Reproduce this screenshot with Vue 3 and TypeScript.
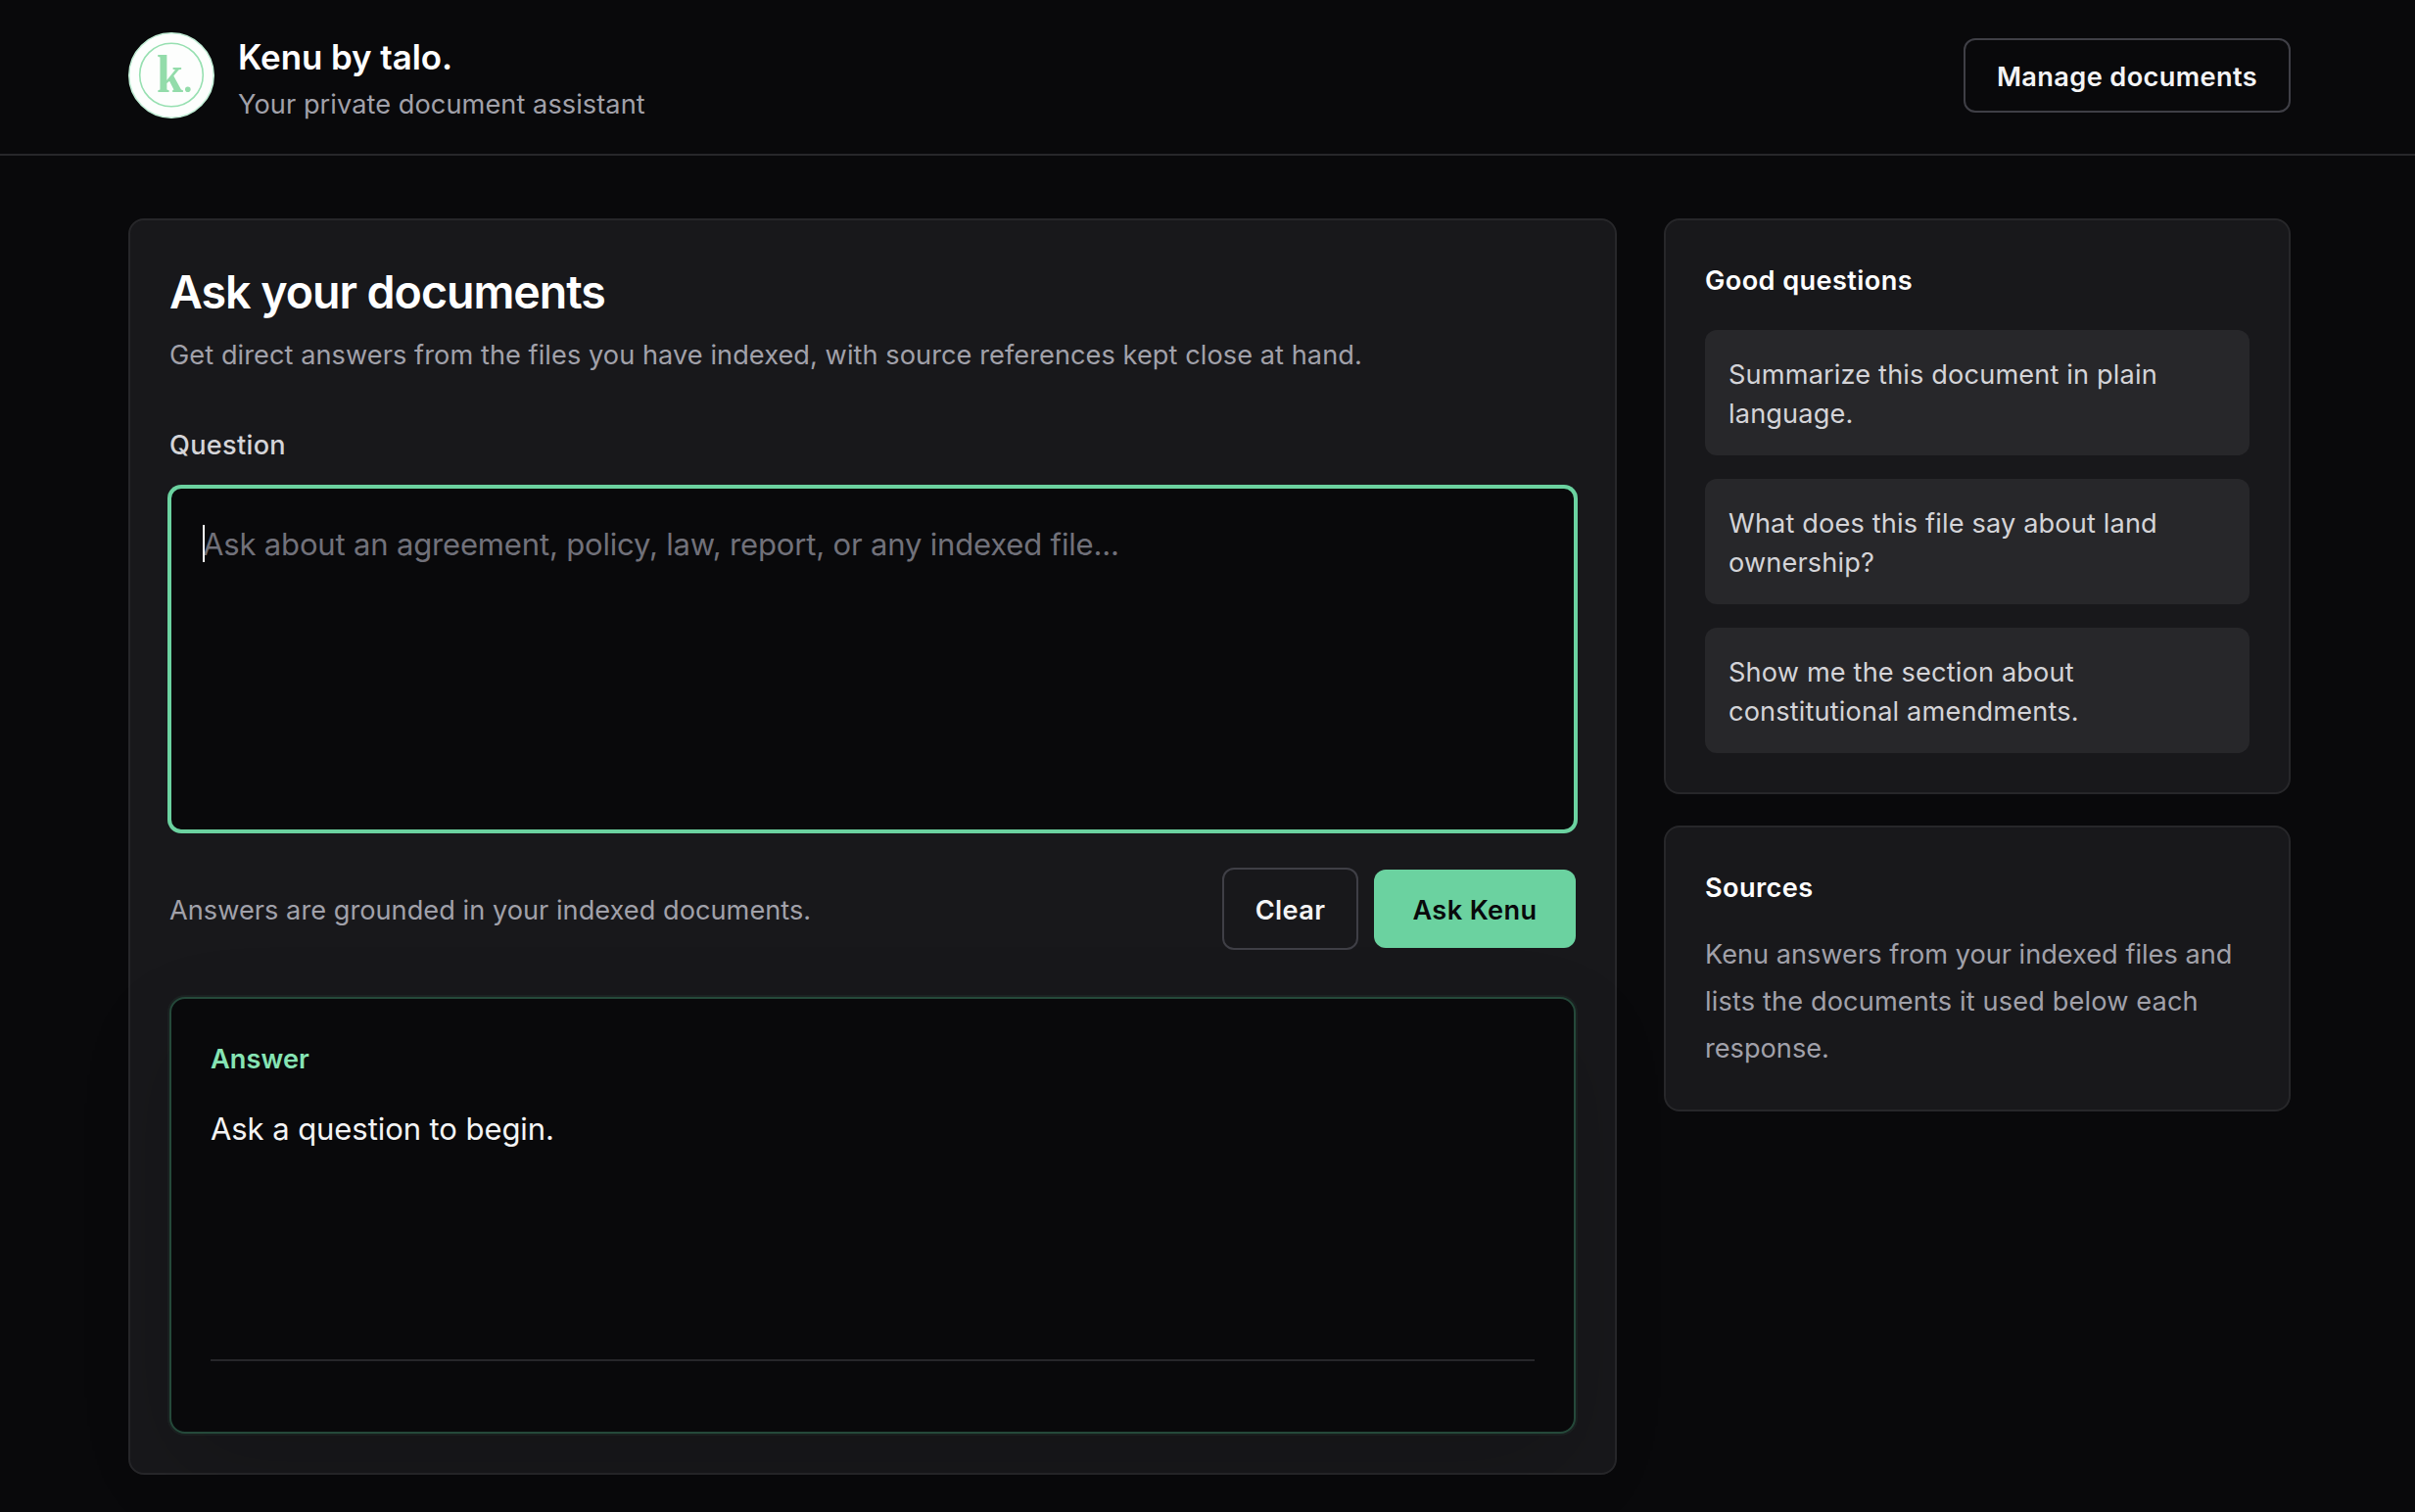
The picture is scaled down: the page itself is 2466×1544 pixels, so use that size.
<script setup lang="ts">
import { ref } from 'vue'

const question = ref('')
const answer = ref('Ask a question to begin.')
const suggestions: string[] = [
  'Summarize this document in plain language.',
  'What does this file say about land ownership?',
  'Show me the section about constitutional amendments.',
]

function clear() {
  question.value = ''
}
</script>

<template>
  <div class="page">
    <header class="topbar">
      <div class="container topbar-inner">
        <div class="brand">
          <svg class="logo" viewBox="0 0 88 88" aria-hidden="true">
            <circle cx="44" cy="44" r="43.2" fill="#fdfefd" stroke="#c4efd8" stroke-width="1.6" />
            <circle cx="44" cy="43.5" r="32.3" fill="none" stroke="#97e0b1" stroke-width="1.6" />
            <text class="logo-letter" x="29" y="61" textLength="27" lengthAdjust="spacingAndGlyphs">k</text>
            <circle cx="60.8" cy="58.3" r="2.8" fill="#93dcaa" />
          </svg>
          <div class="brand-text">
            <h1 class="brand-name">Kenu by talo.</h1>
            <p class="brand-sub">Your private document assistant</p>
          </div>
        </div>
        <button class="btn btn-outline manage" type="button">Manage documents</button>
      </div>
    </header>

    <main class="container layout">
      <section class="card ask">
        <h2 class="ask-title">Ask your documents</h2>
        <p class="ask-sub">Get direct answers from the files you have indexed, with source references kept close at hand.</p>

        <label class="field-label" for="question">Question</label>
        <div class="field">
          <textarea
            id="question"
            v-model="question"
            placeholder="Ask about an agreement, policy, law, report, or any indexed file..."
          ></textarea>
          <span class="caret"></span>
        </div>

        <div class="actions">
          <p class="hint">Answers are grounded in your indexed documents.</p>
          <div class="buttons">
            <button class="btn btn-outline clear" type="button" @click="clear">Clear</button>
            <button class="btn btn-primary" type="button">Ask Kenu</button>
          </div>
        </div>

        <div class="answer">
          <h3 class="answer-title">Answer</h3>
          <p class="answer-body">{{ answer }}</p>
          <div class="answer-foot"></div>
        </div>
      </section>

      <aside class="side">
        <section class="card side-card">
          <h3 class="side-title">Good questions</h3>
          <div class="suggestions">
            <div v-for="item in suggestions" :key="item" class="suggestion">{{ item }}</div>
          </div>
        </section>
        <section class="card side-card sources">
          <h3 class="side-title">Sources</h3>
          <p class="sources-text">
            Kenu answers from your indexed files and
            <span class="loose">lists the documents it used below each</span>
            response.
          </p>
        </section>
      </aside>
    </main>
  </div>
</template>

<style>
html,
body {
  background: #09090b;
}
</style>

<style scoped>
.page {
  box-sizing: border-box;
  min-height: 1544px;
  background: #09090b;
  color: #f4f4f5;
  font-family: Inter, "Liberation Sans", sans-serif;
  font-size: 27.16px;
  line-height: 40px;
}
.page * {
  box-sizing: border-box;
}
h1,
h2,
h3,
p {
  margin: 0;
}
.container {
  width: 2208px;
  margin-left: 131px;
}
.topbar {
  height: 159px;
  border-bottom: 2px solid #27272a;
}
.topbar-inner {
  display: flex;
  align-items: flex-start;
  justify-content: space-between;
  padding-top: 33px;
}
.brand {
  display: flex;
  gap: 24px;
}
.logo {
  display: block;
  width: 88px;
  height: 88px;
}
.logo-letter {
  font-family: "Liberation Serif", serif;
  font-size: 54px;
  font-weight: 700;
  fill: #93dcaa;
}
.brand-name {
  font-size: 34.92px;
  font-weight: 600;
  line-height: 50px;
  letter-spacing: -0.06px;
  color: #fff;
}
.brand-sub {
  margin-top: 6px;
  line-height: 36px;
  letter-spacing: 0.07px;
  color: #a1a1aa;
}
.btn {
  display: flex;
  align-items: center;
  justify-content: center;
  border-radius: 12px;
  font-family: inherit;
  font-size: 27.16px;
  font-weight: 600;
  line-height: 40px;
  letter-spacing: 0.38px;
  white-space: nowrap;
}
.btn-outline {
  border: 2px solid #3f3f46;
  background: transparent;
  color: #f4f4f5;
}
.manage {
  width: 334px;
  height: 76px;
  margin-top: 6px;
  padding: 4px 0 0;
}
.layout {
  display: flex;
  align-items: flex-start;
  gap: 48px;
  padding-top: 64px;
}
.card {
  border: 2px solid #27272a;
  border-radius: 16px;
  background: #18181b;
}
.ask {
  width: 1520px;
  padding: 40px;
}
.ask-title {
  padding-top: 1px;
  font-size: 46.56px;
  font-weight: 600;
  line-height: 64px;
  letter-spacing: -1.033px;
  color: #fff;
}
.ask-sub {
  margin-top: 13px;
  letter-spacing: 0.065px;
  color: #a1a1aa;
}
.field-label {
  display: block;
  margin-top: 52px;
  font-weight: 500;
  letter-spacing: 0.3px;
  color: #d4d4d8;
}
.field {
  position: relative;
  margin-top: 22px;
}
textarea {
  display: block;
  width: 100%;
  height: 352px;
  margin: 0;
  padding: 29px 32px;
  border: 2px solid #6bd2a0;
  border-radius: 12px;
  outline: none;
  background: #09090b;
  box-shadow: 0 0 0 2px #6bd2a0;
  color: #fff;
  font-family: inherit;
  font-size: 31.04px;
  line-height: 56px;
  letter-spacing: -0.18px;
  resize: none;
}
textarea::placeholder {
  color: #71717a;
  opacity: 1;
}
.caret {
  position: absolute;
  top: 39px;
  left: 34px;
  width: 2px;
  height: 38px;
  background: #fff;
}
.actions {
  display: flex;
  align-items: center;
  justify-content: space-between;
  height: 84px;
  margin-top: 37px;
}
.hint {
  padding-top: 4px;
  letter-spacing: 0.03px;
  color: #a1a1aa;
}
.buttons {
  display: flex;
  align-items: center;
  gap: 16px;
}
.clear {
  width: 139px;
  height: 84px;
  padding: 4px 0 0;
}
.btn-primary {
  width: 206px;
  height: 80px;
  padding: 4px 0 0;
  border: 0;
  background: #6bd2a0;
  color: #09090b;
}
.answer {
  display: flex;
  flex-direction: column;
  height: 446px;
  margin-top: 48px;
  padding: 42px 40px 40px;
  border: 2px solid #25493a;
  border-radius: 16px;
  background: #09090b;
  box-shadow: 0 0 0 2px rgba(107, 210, 160, 0.06), 0 36px 100px -10px rgba(0, 0, 0, 0.18);
}
.answer-title {
  font-size: 27.16px;
  font-weight: 600;
  letter-spacing: 0.06px;
  color: #86e4b4;
}
.answer-body {
  margin-top: 23px;
  font-size: 31.04px;
  line-height: 56px;
  letter-spacing: -0.087px;
  color: #f4f4f5;
}
.answer-foot {
  height: 34px;
  margin-top: auto;
  border-top: 2px solid #27272a;
}
.side {
  display: flex;
  flex-direction: column;
  gap: 32px;
  width: 640px;
}
.side-card {
  padding: 40px;
}
.side-title {
  padding-top: 2px;
  font-size: 27.16px;
  font-weight: 600;
  letter-spacing: 0.4px;
  color: #fff;
}
.suggestions {
  display: flex;
  flex-direction: column;
  gap: 24px;
  margin-top: 30px;
}
.suggestion {
  height: 128px;
  padding: 26px 24px 0;
  border-radius: 12px;
  background: #27272a;
  letter-spacing: 0.15px;
  color: #d4d4d8;
}
.sources {
  padding-bottom: 38px;
}
.sources-text {
  margin-top: 24px;
  line-height: 48px;
  color: #a1a1aa;
}
.loose {
  display: block;
  letter-spacing: 0.14px;
}
</style>
